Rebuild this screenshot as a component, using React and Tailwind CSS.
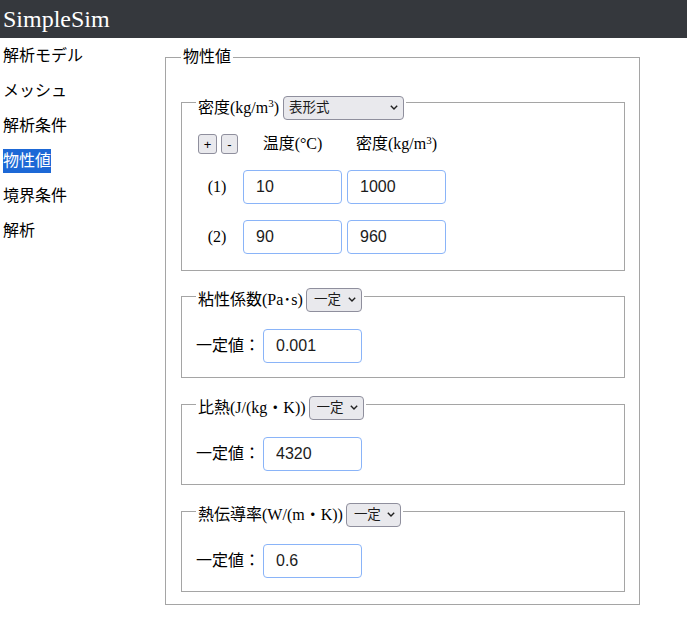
import { useState } from "react";

const jp = { fontFamily: '"Liberation Serif", "Noto Sans CJK JP", serif' };
const sans = { fontFamily: '"Liberation Sans", "Noto Sans CJK JP", sans-serif' };

const menu = ["解析モデル", "メッシュ", "解析条件", "物性値", "境界条件", "解析"];

function Chevron() {
  return (
    <svg width="8" height="5" viewBox="0 0 8 5" className="pointer-events-none absolute right-[6px] top-[10px]">
      <path d="M0.8 0.8l3.2 3.2 3.2-3.2" fill="none" stroke="#1f1f1f" strokeWidth="1.4" />
    </svg>
  );
}

function Select({ value, options, width, pad }) {
  return (
    <span className="relative inline-block">
      <select
        defaultValue={value}
        style={sans}
        className={`${width} ${pad} h-[24px] appearance-none rounded-[4px] border border-[#8f8f9d] bg-[#e9e9ed] text-[13.5px] leading-[20px] text-[#1b1b1b]`}
      >
        {options.map((o) => (
          <option key={o}>{o}</option>
        ))}
      </select>
      <Chevron />
    </span>
  );
}

function NumInput({ value }) {
  return (
    <input
      defaultValue={value}
      style={sans}
      className="box-border h-[34px] w-[99px] rounded-[4px] border border-[#8ab4f8] bg-white pl-3 text-[16px] text-[#1b1b1b] outline-none"
    />
  );
}

function ConstBox({ label, value, selectWidth, spacing }) {
  return (
    <fieldset className={`${spacing} border border-[#a5a5a5] px-[14px] pt-[17px]`}>
      <legend className="px-0.5 pt-[6px]">
        <span className="flex items-center gap-[3px] text-[16px] leading-[24px]">
          <span>{label}</span>
          <Select value="一定" options={["一定", "表形式"]} width={selectWidth} pad="pl-[7px]" />
        </span>
      </legend>
      <div className="flex items-center gap-[3px]">
        <span className="w-[64px] text-[16px]">一定値：</span>
        <NumInput value={value} />
      </div>
    </fieldset>
  );
}

export default function App() {
  const [selected] = useState("物性値");
  return (
    <div style={jp} className="min-h-screen bg-white text-black">
      <div className="flex h-[38px] items-center bg-[#35383d] px-[3px]">
        <span style={{ fontFamily: '"Liberation Serif", serif' }} className="text-2xl text-white">
          SimpleSim
        </span>
      </div>

      <div className="flex">
        <ul className="w-[165px] pl-[3px]">
          {menu.map((m) => (
            <li key={m} className="flex h-[35px] items-center text-[16px]">
              <span className={m === selected ? "bg-[#1d68d6] text-white" : ""}>{m}</span>
            </li>
          ))}
        </ul>

        <fieldset className="mt-[8px] w-[475px] border border-[#a5a5a5] pb-[12px] pl-[15px] pr-[14px] pt-[17px]">
          <legend className="px-0.5 text-[16px] leading-[22px]">物性値</legend>

          <fieldset className="border border-[#a5a5a5] px-[14px] pb-[16px] pt-[14px]">
            <legend className="px-0.5 pt-[10px]">
              <span className="flex items-center gap-[4px] text-[16px] leading-[24px]">
                <span>
                  密度(kg/m<sup className="text-[11px]">3</sup>)
                </span>
                <Select value="表形式" options={["表形式", "一定"]} width="w-[121px]" pad="pl-[5px]" />
              </span>
            </legend>

            <div className="grid grid-cols-[42px_99px_99px] items-center gap-x-[5px] gap-y-[16px]">
              <div className="flex h-[20px] items-center gap-[4px] pl-[2px]">
                <button style={sans} className="h-[20px] w-[19px] rounded-[3px] border border-[#8f8f9d] bg-[#e9e9ed] text-[13px] leading-none">
                  +
                </button>
                <button style={sans} className="h-[20px] w-[17px] rounded-[3px] border border-[#8f8f9d] bg-[#e9e9ed] text-[13px] leading-none">
                  -
                </button>
              </div>
              <div className="text-center text-[16px] leading-[20px]">温度(°C)</div>
              <div className="text-center text-[16px] leading-[20px]">
                密度(kg/m<sup className="text-[11px]">3</sup>)
              </div>

              <div className="text-center text-[16px]">(1)</div>
              <NumInput value="10" />
              <NumInput value="1000" />

              <div className="-mt-[1px] text-center text-[16px]">(2)</div>
              <NumInput value="90" />
              <NumInput value="960" />
            </div>
          </fieldset>

          <ConstBox label="粘性係数(Pa･s)" value="0.001" selectWidth="w-[56px]" spacing="mt-[10px] pb-[14px]" />
          <ConstBox label="比熱(J/(kg・K))" value="4320" selectWidth="w-[55px]" spacing="mt-[11px] pb-[13px]" />
          <ConstBox label="熱伝導率(W/(m・K))" value="0.6" selectWidth="w-[55px]" spacing="mt-[11px] pb-[13px]" />
        </fieldset>
      </div>
    </div>
  );
}
